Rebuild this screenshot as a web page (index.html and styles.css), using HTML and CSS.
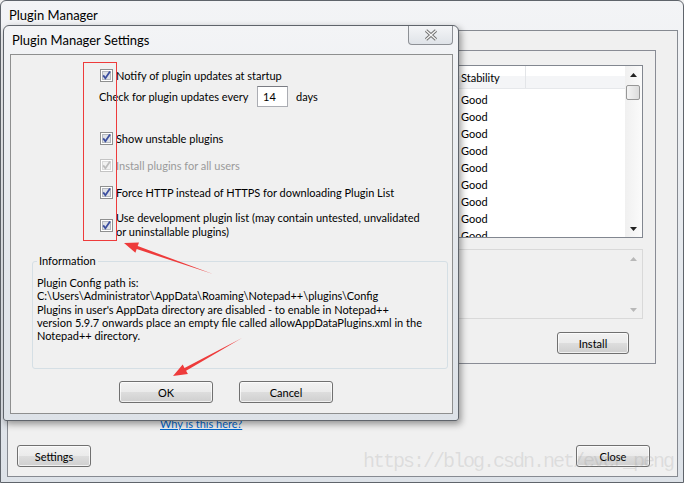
FILE: index.html
```html
<!DOCTYPE html>
<html lang="en">
<head>
    <meta charset="UTF-8">
    <title>Plugin Manager</title>
    <link rel="stylesheet" href="styles.css">
</head>
<body>
    <!-- main Plugin Manager window (behind) -->
    <div class="window main">
        <div class="titlebar">Plugin Manager</div>
        <div class="client">
            <div class="tabs">
                <div class="tab-strip">
                    <span class="tab"></span>
                    <span class="tab"></span>
                    <span class="tab"></span>
                </div>
                <div class="tab-page">
                    <div class="listview">
                        <div class="lv-main">
                            <div class="lv-header">
                                <span class="col col-name"></span>
                                <span class="col col-stab">Stability</span>
                                <span class="col col-rest"></span>
                            </div>
                            <div class="lv-rows">
                                <div class="lv-row"><span class="cell-name"></span><span>Good</span></div>
                                <div class="lv-row"><span class="cell-name"></span><span>Good</span></div>
                                <div class="lv-row"><span class="cell-name"></span><span>Good</span></div>
                                <div class="lv-row"><span class="cell-name"></span><span>Good</span></div>
                                <div class="lv-row"><span class="cell-name"></span><span>Good</span></div>
                                <div class="lv-row"><span class="cell-name"></span><span>Good</span></div>
                                <div class="lv-row"><span class="cell-name"></span><span>Good</span></div>
                                <div class="lv-row"><span class="cell-name"></span><span>Good</span></div>
                                <div class="lv-row"><span class="cell-name"></span><span>Good</span></div>
                            </div>
                        </div>
                        <div class="vscroll">
                            <span class="sb-btn"><svg width="7" height="4" viewBox="0 0 7 4"><path d="M0 4 L3.5 0 L7 4 Z" fill="#222"/></svg></span>
                            <span class="sb-thumb"></span>
                            <span class="sb-track"></span>
                            <span class="sb-btn"><svg width="7" height="4" viewBox="0 0 7 4"><path d="M0 0 L3.5 4 L7 0 Z" fill="#222"/></svg></span>
                        </div>
                    </div>
                    <div class="desc">
                        <div class="vscroll flat">
                            <span class="sb-btn"><svg width="7" height="4" viewBox="0 0 7 4"><path d="M0 4 L3.5 0 L7 4 Z" fill="#b8b8b8"/></svg></span>
                            <span class="sb-track"></span>
                            <span class="sb-btn"><svg width="7" height="4" viewBox="0 0 7 4"><path d="M0 0 L3.5 4 L7 0 Z" fill="#b8b8b8"/></svg></span>
                        </div>
                    </div>
                    <div class="actions">
                        <button class="btn btn-install">Install</button>
                    </div>
                </div>
            </div>
            <div class="status-row">
                <span class="progress"></span>
                <a class="link" href="#">Why is this here?</a>
            </div>
            <div class="bottom-row">
                <button class="btn btn-small">Settings</button>
                <button class="btn btn-small">Close</button>
            </div>
        </div>
    </div>

    <!-- Plugin Manager Settings dialog (on top) -->
    <div class="window dialog">
        <div class="dlg-titlebar">
            <span class="dlg-title">Plugin Manager Settings</span>
            <span class="close-x">
                <svg width="14" height="12" viewBox="0 0 14 12">
                    <path d="M2 1.5 L12 10.5 M12 1.5 L2 10.5" stroke="#707070" stroke-width="3.2" fill="none"/>
                    <path d="M2 1.5 L12 10.5 M12 1.5 L2 10.5" stroke="#f6f6f6" stroke-width="1.3" fill="none"/>
                </svg>
            </span>
        </div>
        <div class="dlg-client">
            <div class="opt-row">
                <svg class="cb" width="13" height="13" viewBox="0 0 13 13"><rect x=".5" y=".5" width="12" height="12" fill="#fff" stroke="#8e8f8f"/><rect x="2.5" y="2.5" width="8" height="8" fill="#dfe2e7" stroke="#b4b8be"/><path d="M3.2 6.4 L5.4 9.3 L10 2.6" stroke="#3c4f9f" stroke-width="1.8" fill="none"/></svg>
                <span>Notify of plugin updates at startup</span>
            </div>
            <div class="opt-row days-row">
                <span class="days-label">Check for plugin updates every</span>
                <span class="num-input">14</span>
                <span class="days-unit">days</span>
            </div>
            <div class="opt-row">
                <svg class="cb" width="13" height="13" viewBox="0 0 13 13"><rect x=".5" y=".5" width="12" height="12" fill="#fff" stroke="#8e8f8f"/><rect x="2.5" y="2.5" width="8" height="8" fill="#dfe2e7" stroke="#b4b8be"/><path d="M3.2 6.4 L5.4 9.3 L10 2.6" stroke="#3c4f9f" stroke-width="1.8" fill="none"/></svg>
                <span>Show unstable plugins</span>
            </div>
            <div class="opt-row disabled">
                <svg class="cb" width="13" height="13" viewBox="0 0 13 13"><rect x=".5" y=".5" width="12" height="12" fill="#fff" stroke="#c4c4c4"/><rect x="2.5" y="2.5" width="8" height="8" fill="#f2f2f2" stroke="#dadada"/><path d="M3.2 6.4 L5.4 9.3 L10 2.6" stroke="#bdbdbd" stroke-width="1.8" fill="none"/></svg>
                <span>Install plugins for all users</span>
            </div>
            <div class="opt-row">
                <svg class="cb" width="13" height="13" viewBox="0 0 13 13"><rect x=".5" y=".5" width="12" height="12" fill="#fff" stroke="#8e8f8f"/><rect x="2.5" y="2.5" width="8" height="8" fill="#dfe2e7" stroke="#b4b8be"/><path d="M3.2 6.4 L5.4 9.3 L10 2.6" stroke="#3c4f9f" stroke-width="1.8" fill="none"/></svg>
                <span>Force HTTP instead of HTTPS for downloading Plugin List</span>
            </div>
            <div class="opt-row two-line">
                <svg class="cb" width="13" height="13" viewBox="0 0 13 13"><rect x=".5" y=".5" width="12" height="12" fill="#fff" stroke="#8e8f8f"/><rect x="2.5" y="2.5" width="8" height="8" fill="#dfe2e7" stroke="#b4b8be"/><path d="M3.2 6.4 L5.4 9.3 L10 2.6" stroke="#3c4f9f" stroke-width="1.8" fill="none"/></svg>
                <span>Use development plugin list (may contain untested, unvalidated<br>or uninstallable plugins)</span>
            </div>

            <fieldset class="info">
                <legend>Information</legend>
                <p>Plugin Config path is:<br>
                C:\Users\Administrator\AppData\Roaming\Notepad++\plugins\Config<br>
                Plugins in user's AppData directory are disabled - to enable in Notepad++<br>
                version 5.9.7 onwards place an empty file called allowAppDataPlugins.xml in the<br>
                Notepad++ directory.</p>
            </fieldset>

            <div class="dlg-buttons">
                <button class="btn btn-wide">OK</button>
                <button class="btn btn-wide">Cancel</button>
            </div>
        </div>
    </div>

    <!-- red annotation marks -->
    <svg class="annotations" width="684" height="483" viewBox="0 0 684 483">
        <rect x="83.5" y="62.5" width="33" height="178" fill="none" stroke="#ee3b3b" stroke-width="1"/>
        <polygon points="124,243 139,242.4 137.7,246.1 213,274 136.7,249.1 135.4,252.8" fill="#ee3b3b"/>
        <polygon points="173,376 187.9,374.1 186.1,370.7 242,338 184.5,367.9 182.7,364.5" fill="#ee3b3b"/>
    </svg>

    <div class="watermark">https://blog.csdn.net/ever_peng</div>
</body>
</html>
```

FILE: styles.css
```css
body {
    margin: 0;
    width: 684px;
    height: 483px;
    position: relative;
    overflow: hidden;
    font-family: Lato, "Open Sans", sans-serif;
    font-size: 11px;
    color: #000;
    background: #f0f0f0;
}
.window {
    box-sizing: border-box;
    display: flex;
    flex-direction: column;
    border: 1px solid #5f646b;
    background: linear-gradient(#f3f4f6, #e3e7ec 60%, #dde2e8);
}
.main {
    width: 684px;
    height: 483px;
    border-radius: 6px 6px 0 0;
    padding: 0 5px 5px 6px;
}
.titlebar {
    height: 29px;
    flex: none;
    display: flex;
    align-items: center;
    padding-left: 2px;
    padding-bottom: 2px;
    box-sizing: border-box;
    font-size: 13px;
}
.client {
    flex: 1;
    display: flex;
    flex-direction: column;
    border: 1px solid #868a91;
    background: #f0f0f0;
}

/* tab control */
.tabs {
    margin: 0 21px 0 9px;
}
.tab-strip {
    height: 19px;
    display: flex;
    align-items: flex-end;
    padding-left: 2px;
}
.tab {
    width: 60px;
    height: 16px;
    border: 1px solid #898c95;
    border-bottom: none;
    background: linear-gradient(#f2f2f2, #e0e0e0);
}
.tab-page {
    box-sizing: border-box;
    height: 314px;
    border: 1px solid #898c95;
    padding: 14px 12px 0 9px;
}
.listview {
    height: 173px;
    box-sizing: border-box;
    display: flex;
    border: 1px solid #828790;
    background: #fff;
}
.lv-main {
    flex: 1;
    overflow: hidden;
}
.lv-header {
    height: 22px;
    display: flex;
    background: linear-gradient(#fff 45%, #f4f5f7 45%);
    border-bottom: 1px solid #e6e8eb;
}
.col {
    box-sizing: border-box;
    display: flex;
    align-items: center;
    padding-left: 6px;
    border-right: 1px solid #e3e5e8;
}
.col-name {
    width: 427px;
}
.col-stab {
    width: 71px;
}
.col-rest {
    flex: 1;
    border-right: none;
}
.lv-rows {
    padding-top: 2px;
}
.lv-row {
    display: flex;
    height: 17px;
    line-height: 17px;
}
.cell-name {
    width: 433px;
}
.vscroll {
    width: 17px;
    display: flex;
    flex-direction: column;
    background: linear-gradient(90deg, #f0f0f0, #fbfbfb);
}
.sb-btn {
    height: 17px;
    display: flex;
    align-items: center;
    justify-content: center;
}
.sb-thumb {
    margin: 2px 2px 0 1px;
    height: 15px;
    box-sizing: border-box;
    border: 1px solid #979797;
    border-radius: 2px;
    background: linear-gradient(90deg, #f4f4f4, #dcdcdc);
}
.sb-track {
    flex: 1;
}
.desc {
    margin-top: 11px;
    height: 70px;
    box-sizing: border-box;
    display: flex;
    justify-content: flex-end;
    border: 1px solid #d9d9d9;
    background: #f0f0f0;
}
.vscroll.flat {
    background: #f0f0f0;
}
.actions {
    display: flex;
    justify-content: flex-end;
    margin: 13px 14px 0 0;
}
.status-row {
    display: flex;
    align-items: center;
    height: 16px;
    margin-top: 51px;
    padding-left: 12px;
}
.progress {
    align-self: flex-start;
    width: 135px;
    height: 7px;
    margin: -2px 5px 0 0;
    background: linear-gradient(90deg, #3f6fae, #6ea6d6 35%, #7dc08a 45%, #5aa764);
    opacity: 0.45;
}
.link {
    color: #0066cc;
    text-decoration: underline;
}
.bottom-row {
    display: flex;
    justify-content: space-between;
    padding: 0 27px 0 9px;
    margin-top: auto;
    margin-bottom: 9px;
}

/* Windows 7 style push buttons */
.btn {
    box-sizing: border-box;
    height: 22px;
    padding: 0;
    font-family: inherit;
    font-size: 11px;
    color: #000;
    border: 1px solid #707070;
    border-radius: 3px;
    background: linear-gradient(#f2f2f2, #ebebeb 48%, #dddddd 52%, #cfcfcf);
    box-shadow: inset 0 0 0 1px rgba(255, 255, 255, 0.7);
}
.btn-small {
    width: 74px;
}
.btn-install {
    width: 72px;
}
.btn-wide {
    width: 94px;
}

/* settings dialog */
.dialog {
    position: absolute;
    left: 3px;
    top: 25px;
    width: 456px;
    height: 396px;
    border-radius: 6px 6px 3px 3px;
    padding: 0 5px 6px 6px;
    box-shadow: 2px 3px 7px rgba(0, 0, 0, 0.4);
}
.dlg-titlebar {
    height: 28px;
    flex: none;
    display: flex;
    justify-content: space-between;
    align-items: flex-start;
    margin-left: -6px;
    padding-left: 8px;
    font-size: 13px;
}
.dlg-title {
    margin-top: 6px;
}
.close-x {
    width: 45px;
    height: 19px;
    box-sizing: border-box;
    display: flex;
    align-items: center;
    justify-content: center;
    border: 1px solid #8d9095;
    border-top: none;
    border-radius: 0 0 4px 4px;
    background: linear-gradient(#f4f5f7, #dfe3e8);
}
.dlg-client {
    flex: 1;
    display: flex;
    flex-direction: column;
    border: 1px solid #8e8f8f;
    background: #f0f0f0;
    padding-top: 12px;
}
.opt-row {
    display: flex;
    align-items: center;
    gap: 3px;
    height: 16px;
    padding-left: 89px;
    margin-bottom: 11px;
    white-space: nowrap;
}
.cb {
    flex: none;
}
.days-row {
    height: 21px;
    margin-top: -8px;
    padding-left: 88px;
    margin-bottom: 23px;
}
.days-label {
    width: 155px;
}
.num-input {
    box-sizing: border-box;
    width: 31px;
    height: 21px;
    padding-left: 5px;
    line-height: 19px;
    border: 1px solid #abadb3;
    border-top-color: #7a7c83;
    background: #fff;
}
.days-unit {
    margin-left: 5px;
}
.disabled {
    color: #9a9a9a;
}
.two-line {
    height: 28px;
    margin-bottom: 0;
    line-height: 14px;
}
.info {
    box-sizing: border-box;
    width: 416px;
    height: 116px;
    margin: 14px 0 0 21px;
    padding: 7px 4px 0 4px;
    border: 1px solid #d5dfe5;
    border-radius: 3px;
}
.info legend {
    padding: 0 2px;
    line-height: 16px;
}
.info p {
    margin: 0;
    line-height: 13.3px;
    white-space: nowrap;
}
.dlg-buttons {
    display: flex;
    gap: 26px;
    margin-top: 12px;
    padding-left: 108px;
}

/* overlays */
.annotations {
    position: absolute;
    left: 0;
    top: 0;
    pointer-events: none;
}
.watermark {
    position: absolute;
    left: 363px;
    top: 450px;
    font-family: "Liberation Mono", monospace;
    font-size: 20px;
    letter-spacing: -2px;
    color: rgba(150, 150, 150, 0.22);
    pointer-events: none;
}
```
